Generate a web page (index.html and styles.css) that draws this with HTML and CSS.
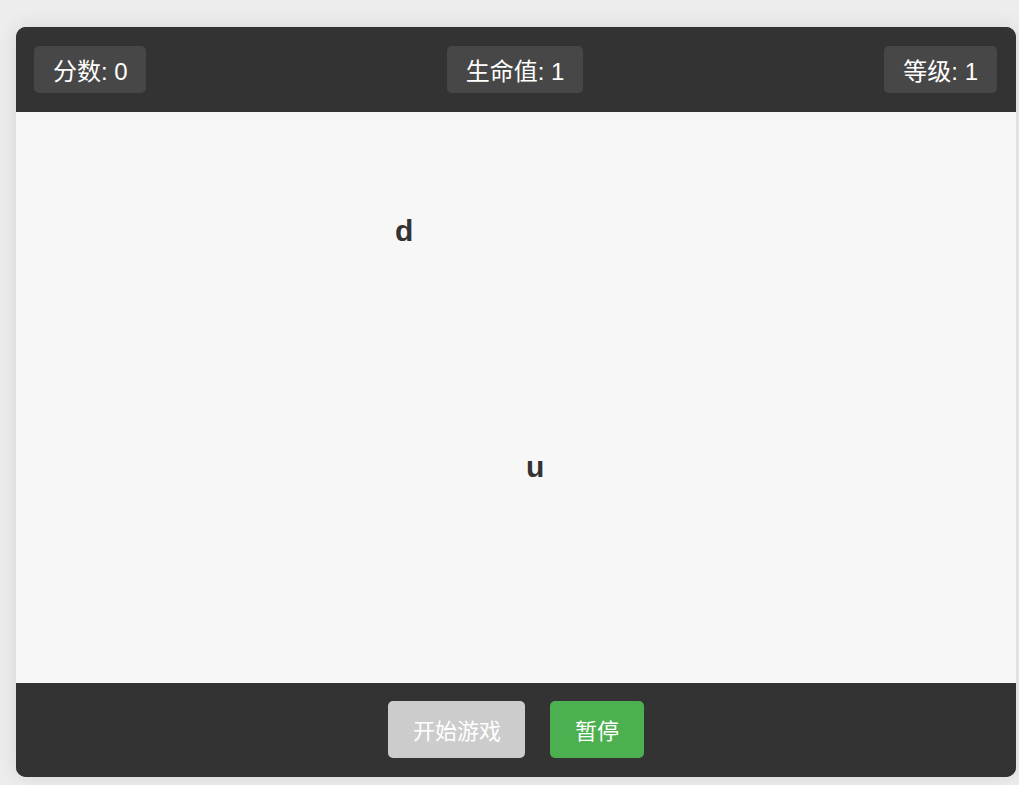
FILE: index.html
```html
<!DOCTYPE html>
<html lang="zh-CN">
<head>
<meta charset="utf-8">
<title>打字游戏</title>
<link rel="stylesheet" href="styles.css">
</head>
<body>
<div class="game">
  <div class="topbar">
    <div class="stat">分数: 0</div>
    <div class="stat">生命值: 1</div>
    <div class="stat">等级: 1</div>
  </div>
  <div class="field">
    <span class="letter letter-d">d</span>
    <span class="letter letter-u">u</span>
  </div>
  <div class="controls">
    <button class="btn btn-start" disabled>开始游戏</button>
    <button class="btn btn-pause">暂停</button>
  </div>
</div>
</body>
</html>
```
FILE: styles.css
```css
html, body {
  margin: 0;
  padding: 0;
  background: #ededed;
  height: 785px;
  overflow: hidden;
}
body {
  font-family: "Liberation Sans", "Noto Sans CJK SC", sans-serif;
  padding-top: 27px;
  padding-left: 16px;
  box-sizing: border-box;
}
.game {
  width: 1000px;
  border-radius: 10px;
  overflow: hidden;
  box-shadow: 0 0 20px rgba(0, 0, 0, 0.1);
  background: #333;
}
.topbar {
  display: flex;
  justify-content: space-between;
  align-items: center;
  padding: 19px 19px 19px 18px;
  background: #333;
}
.stat {
  background: #474747;
  color: #fff;
  font-size: 24px;
  line-height: 27px;
  padding: 12px 19px 8px 19px;
  border-radius: 5px;
}
.stat:first-child { padding-right: 18px; }
.field {
  position: relative;
  height: 571px;
  background: #f7f7f7;
}
.letter {
  position: absolute;
  font-size: 30px;
  line-height: 30px;
  font-weight: bold;
  color: #333;
}
.letter-d { left: 379px; top: 104px; }
.letter-u { left: 510px; top: 340px; }
.controls {
  display: flex;
  justify-content: center;
  gap: 25px;
  padding: 18px 0 19px;
  background: #333;
}
.btn {
  font-family: "Liberation Sans", "Noto Sans CJK SC", sans-serif;
  font-size: 22px;
  line-height: 25px;
  padding: 18px 25px 14px;
  border: none;
  border-radius: 5px;
  color: #fff;
}
.btn-start { background: #ccc; padding-right: 24px; }
.btn-pause { background: #4caf50; }
```
